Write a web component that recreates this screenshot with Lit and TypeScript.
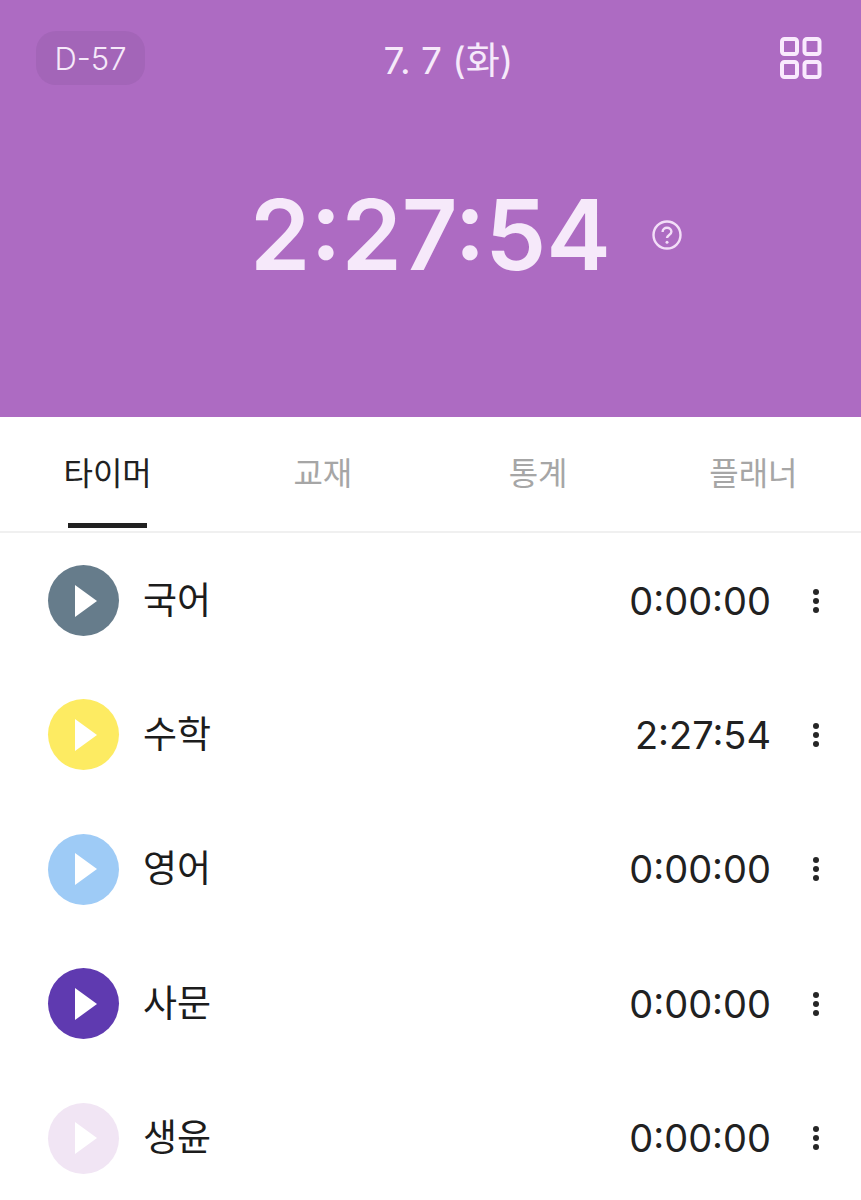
import { LitElement, html, css } from "lit";
import { customElement } from "lit/decorators.js";

const subjects = [
  { name: "국어", time: "0:00:00", color: "#667c8b", tri: "#ffffff" },
  { name: "수학", time: "2:27:54", color: "#fdeb62", tri: "#ffffff" },
  { name: "영어", time: "0:00:00", color: "#9ecbf6", tri: "#ffffff" },
  { name: "사문", time: "0:00:00", color: "#5f3ab0", tri: "#ffffff" },
  { name: "생윤", time: "0:00:00", color: "#f1e5f4", tri: "#ffffff" },
];

@customElement("app-root")
export class AppRoot extends LitElement {
  static styles = css`
    :host {
      display: block;
      width: 861px;
      height: 1200px;
      overflow: hidden;
      background: #fff;
      font-family: Inter, "Noto Sans CJK KR", sans-serif;
      color: #212121;
    }
    .hero {
      height: 417px;
      box-sizing: border-box;
      background: #ad6bc2;
      color: #f6e9fa;
      padding: 31px 36px 0;
    }
    .top {
      display: grid;
      grid-template-columns: 1fr auto 1fr;
      align-items: center;
      height: 54px;
    }
    .dday {
      justify-self: start;
      width: 109px;
      height: 54px;
      border-radius: 20px;
      background: #a365b8;
      display: flex;
      align-items: center;
      justify-content: center;
      font-size: 31px;
      font-weight: 300;
    }
    .date {
      font-size: 37px;
      font-weight: 400;
      margin-left: 36px;
    }
    .grid-icon {
      justify-self: end;
      margin-right: 2px;
      display: block;
    }
    .clock {
      display: flex;
      align-items: center;
      justify-content: center;
      margin-top: 90px;
      height: 120px;
      position: relative;
    }
    .big {
      font-size: 97px;
      font-weight: 600;
      line-height: 120px;
    }
    .help {
      position: absolute;
      left: 616px;
      top: 45px;
      display: block;
    }
    .tabs {
      display: grid;
      grid-template-columns: repeat(4, 1fr);
      height: 116px;
      box-sizing: border-box;
      border-bottom: 2px solid #f0f0f0;
    }
    .tab {
      position: relative;
      display: flex;
      justify-content: center;
      padding-top: 34px;
      font-size: 32px;
      line-height: 45px;
      color: #a6a6a6;
    }
    .tab.on {
      color: #212121;
    }
    .tab.on::after {
      content: "";
      position: absolute;
      left: 68px;
      width: 79px;
      top: 106px;
      height: 5px;
      background: #212121;
    }
    .list {
      display: flex;
      flex-direction: column;
      padding-top: 32px;
    }
    .row {
      display: flex;
      align-items: center;
      height: 71px;
      margin-bottom: 63.4px;
      padding-left: 48px;
    }
    .dot {
      width: 71px;
      height: 71px;
      border-radius: 50%;
      display: flex;
      align-items: center;
      justify-content: center;
      flex: none;
    }
    .name {
      margin-left: 24px;
      font-size: 37px;
      line-height: 50px;
      color: #1c1c1c;
      flex: 1;
    }
    .time {
      font-size: 38px;
      font-weight: 400;
      color: #212121;
      margin-right: 41px;
    }
    .more {
      margin-right: 40px;
      display: block;
    }
  `;

  render() {
    return html`
      <section class="hero">
        <div class="top">
          <div class="dday">D-57</div>
          <div class="date">7. 7 (화)</div>
          <svg class="grid-icon" width="44" height="42" viewBox="0 0 44 42" fill="none" stroke="#f9eafd" stroke-width="4">
            <rect x="3" y="2" width="15" height="15" rx="2.5"></rect>
            <rect x="25.5" y="2" width="15" height="15" rx="2.5"></rect>
            <rect x="3" y="25" width="15" height="15" rx="2.5"></rect>
            <rect x="25.5" y="25" width="15" height="15" rx="2.5"></rect>
          </svg>
        </div>
        <div class="clock">
          <div class="big">2:27:54</div>
          <svg class="help" width="30" height="30" viewBox="0 0 30 30" fill="none" stroke="#f3def8" stroke-width="2.4">
            <circle cx="15" cy="15" r="13.5"></circle>
            <path d="M10.6 12c0-2.6 2-4.2 4.4-4.2s4.4 1.6 4.4 3.9c0 3.2-4.4 3.2-4.4 6.3"></path>
            <circle cx="15" cy="22.3" r="1.5" fill="#f3def8" stroke="none"></circle>
          </svg>
        </div>
      </section>
      <nav class="tabs">
        <div class="tab on">타이머</div>
        <div class="tab">교재</div>
        <div class="tab">통계</div>
        <div class="tab">플래너</div>
      </nav>
      <div class="list">
        ${subjects.map(
          (s) => html`
            <div class="row">
              <div class="dot" style="background:${s.color}">
                <svg width="24" height="32" viewBox="0 0 24 32" style="margin-left:7px">
                  <path d="M0 0L22 16L0 32Z" fill=${s.tri}></path>
                </svg>
              </div>
              <div class="name">${s.name}</div>
              <div class="time">${s.time}</div>
              <svg class="more" width="9" height="26" viewBox="0 0 9 26" fill="#262626">
                <circle cx="4" cy="4" r="3"></circle>
                <circle cx="4" cy="13" r="3"></circle>
                <circle cx="4" cy="22" r="3"></circle>
              </svg>
            </div>
          `
        )}
      </div>
    `;
  }
}
